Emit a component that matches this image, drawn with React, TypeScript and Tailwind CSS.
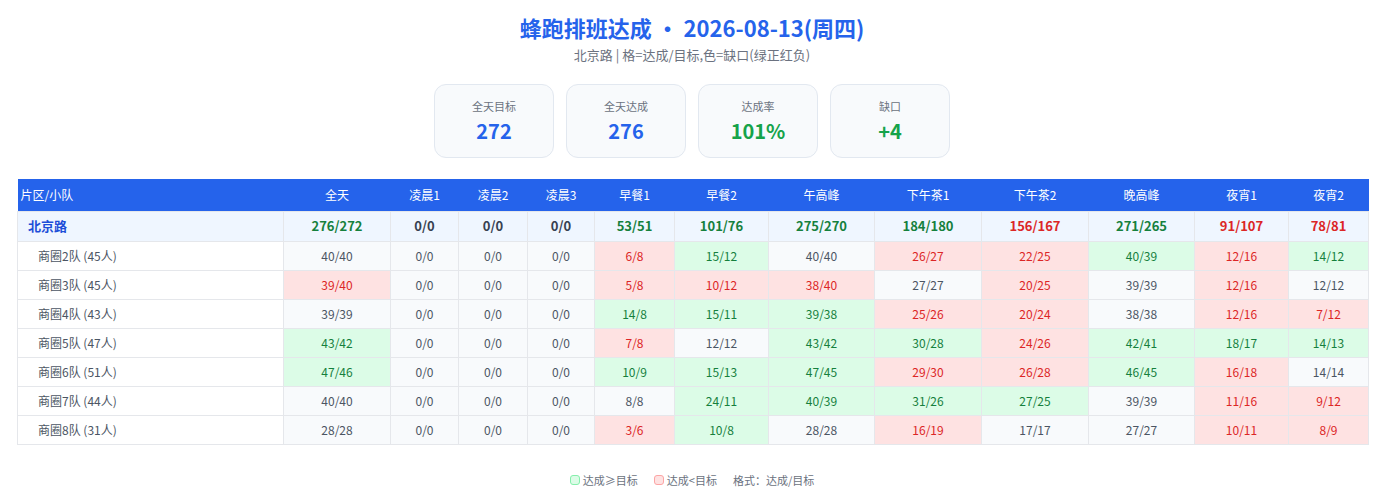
const cols = ["全天", "凌晨1", "凌晨2", "凌晨3", "早餐1", "早餐2", "午高峰", "下午茶1", "下午茶2", "晚高峰", "夜宵1", "夜宵2"]
const widths = [266, 107, 68, 69, 67, 80, 94, 106, 107, 107, 106, 94, 80]

const summary = ["276/272", "0/0", "0/0", "0/0", "53/51", "101/76", "275/270", "184/180", "156/167", "271/265", "91/107", "78/81"]

const teams = [
  { name: "商圈2队 (45人)", cells: ["40/40", "0/0", "0/0", "0/0", "6/8", "15/12", "40/40", "26/27", "22/25", "40/39", "12/16", "14/12"] },
  { name: "商圈3队 (45人)", cells: ["39/40", "0/0", "0/0", "0/0", "5/8", "10/12", "38/40", "27/27", "20/25", "39/39", "12/16", "12/12"] },
  { name: "商圈4队 (43人)", cells: ["39/39", "0/0", "0/0", "0/0", "14/8", "15/11", "39/38", "25/26", "20/24", "38/38", "12/16", "7/12"] },
  { name: "商圈5队 (47人)", cells: ["43/42", "0/0", "0/0", "0/0", "7/8", "12/12", "43/42", "30/28", "24/26", "42/41", "18/17", "14/13"] },
  { name: "商圈6队 (51人)", cells: ["47/46", "0/0", "0/0", "0/0", "10/9", "15/13", "47/45", "29/30", "26/28", "46/45", "16/18", "14/14"] },
  { name: "商圈7队 (44人)", cells: ["40/40", "0/0", "0/0", "0/0", "8/8", "24/11", "40/39", "31/26", "27/25", "39/39", "11/16", "9/12"] },
  { name: "商圈8队 (31人)", cells: ["28/28", "0/0", "0/0", "0/0", "3/6", "10/8", "28/28", "16/19", "17/17", "27/27", "10/11", "8/9"] },
]

const stats = [
  { label: "全天目标", value: "272", color: "text-[#2563eb]" },
  { label: "全天达成", value: "276", color: "text-[#2563eb]" },
  { label: "达成率", value: "101%", color: "text-[#16a34a]" },
  { label: "缺口", value: "+4", color: "text-[#16a34a]" },
]

// gap sign: >0 green, <0 red, 0 neutral
function gap(v: string) {
  const [a, b] = v.split("/").map(Number)
  return a - b
}

function cellClass(v: string) {
  const g = gap(v)
  if (g > 0) return "bg-[#dcfce7] text-[#15803d]"
  if (g < 0) return "bg-[#fee2e2] text-[#dc2626]"
  return "bg-[#f8fafc] text-[#4b5563]"
}

function sumClass(v: string) {
  const g = gap(v)
  if (g > 0) return "text-[#15803d]"
  if (g < 0) return "text-[#dc2626]"
  return "text-[#374151]"
}

export default function App() {
  return (
    <div className="min-h-[502px] bg-white px-[16px] pt-[12px] font-['Noto_Sans_CJK_SC','Noto_Sans',sans-serif]">
      <h1 className="text-center text-[22px] font-bold leading-[30px] text-[#2563eb]">
        蜂跑排班达成 · 2026-08-13(周四)
      </h1>
      <p className="mt-[3px] text-center text-[13px] leading-[20px] text-[#6b7280]">
        北京路 | 格=达成/目标,色=缺口(绿正红负)
      </p>

      <div className="mt-[19px] flex justify-center gap-[12px]">
        {stats.map((s) => (
          <div
            key={s.label}
            className="flex h-[74px] w-[120px] flex-col items-center rounded-[12px] border border-[#e2e8f0] bg-[#f8fafc] pt-[12px]"
          >
            <span className="text-[11px] leading-[18px] text-[#6b7280]">{s.label}</span>
            <span className={`mt-[2px] text-[20px] font-bold leading-[28px] ${s.color}`}>{s.value}</span>
          </div>
        ))}
      </div>

      <table className="mt-[21px] ml-[1px] w-[1351px] table-fixed border-collapse text-[12px]">
        <colgroup>
          {widths.map((w, i) => (
            <col key={i} style={{ width: w }} />
          ))}
        </colgroup>
        <thead>
          <tr className="h-[32px] bg-[#2563eb] text-white">
            <th className="pl-[3px] text-left font-normal">片区/小队</th>
            {cols.map((c) => (
              <th key={c} className="font-normal">
                {c}
              </th>
            ))}
          </tr>
        </thead>
        <tbody>
          <tr className="h-[30px] bg-[#eff6ff] text-[13px] font-bold">
            <td className="border border-[#e5e7eb] pl-[10px] text-[#1d4ed8]">北京路</td>
            {summary.map((v, i) => (
              <td key={i} className={`border border-[#e5e7eb] text-center ${sumClass(v)}`}>
                {v}
              </td>
            ))}
          </tr>
          {teams.map((t) => (
            <tr key={t.name} className="h-[29px]">
              <td className="border border-[#e5e7eb] bg-white pl-[20px] text-[#4b5563]">{t.name}</td>
              {t.cells.map((v, i) => (
                <td key={i} className={`border border-[#e5e7eb] text-center ${cellClass(v)}`}>
                  {v}
                </td>
              ))}
            </tr>
          ))}
        </tbody>
      </table>

      <div className="mt-[26px] flex items-center justify-center gap-[16px] text-[11px] leading-[18px] text-[#6b7280]">
        <span className="flex items-center gap-[3px]">
          <span className="h-[10px] w-[10px] rounded-[3px] border border-[#86efac] bg-[#dcfce7]" />
          达成≥目标
        </span>
        <span className="flex items-center gap-[3px]">
          <span className="h-[10px] w-[10px] rounded-[3px] border border-[#fca5a5] bg-[#fee2e2]" />
          达成&lt;目标
        </span>
        <span>格式：达成/目标</span>
      </div>
    </div>
  )
}
